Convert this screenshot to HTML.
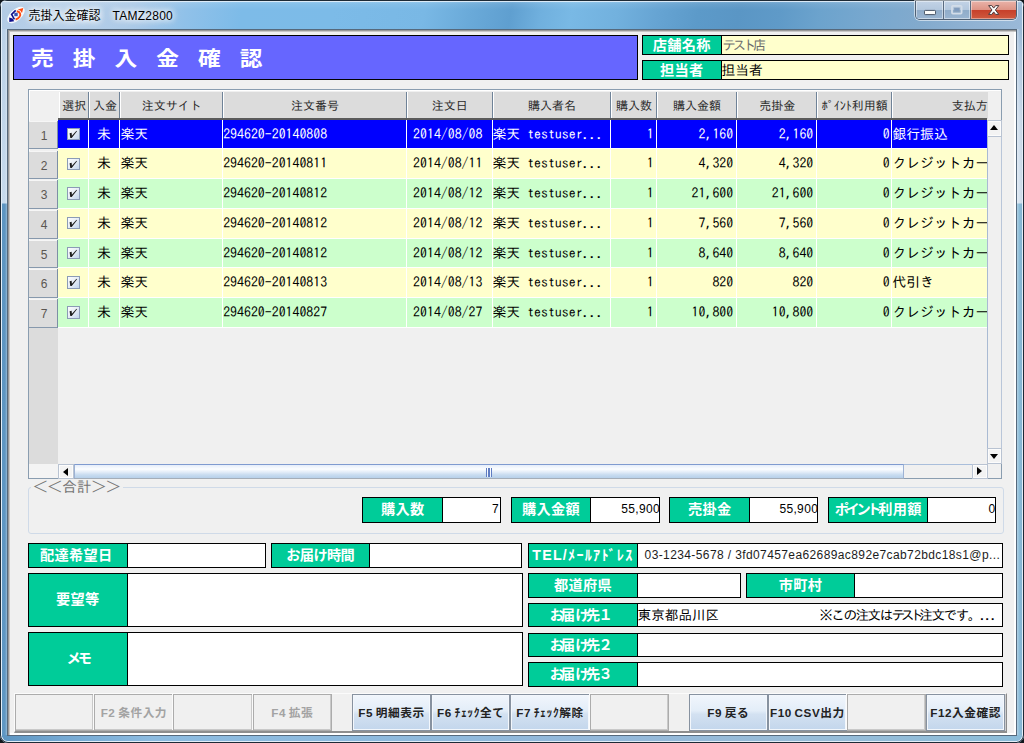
<!DOCTYPE html><html lang="ja"><head><meta charset="utf-8"><title>売掛入金確認 TAMZ2800</title><style>
*{box-sizing:border-box;margin:0;padding:0}
html,body{width:1024px;height:743px;overflow:hidden;background:#10161c;}
body{position:relative;font-family:"Liberation Sans","IPAGothic","Noto Sans CJK JP",sans-serif;font-size:12px;color:#000}
.abs,#win div,#win span,#win svg{position:absolute}
#win{position:absolute;left:0;top:0;width:1024px;height:743px;border-radius:7px 7px 8px 8px;overflow:hidden;
 background:#8cb4d8;
 box-shadow:inset 0 0 0 1px #1d2a36, inset 0 0 0 2px #e3eef8;}
#tb{left:0;top:0;width:1024px;height:30px;
 background:linear-gradient(180deg,rgba(255,255,255,.28) 0,rgba(255,255,255,.08) 4px,rgba(255,255,255,0) 10px,rgba(255,255,255,0) 100%),linear-gradient(100deg,#b2cbe5 0px,#b9d1e9 60px,#adcae7 130px,#90c1e9 185px,#7dbbe8 240px,#7cbbe8 330px,#79b8e5 420px,#6aaad9 465px,#5f9fd0 505px,#70b0de 535px,#79b9e5 565px,#72b1de 610px,#66a4d3 650px,#5c9ac9 690px,#5a96c5 730px,#5f9ac8 770px,#6ca3cd 810px,#78a8cf 860px,#82aacd 910px,#90b2d3 960px,#9dbbd9 1024px);
 box-shadow:inset 0 1px 0 #1d2a36, inset 0 2px 0 rgba(227,238,248,.9), inset 1px 0 0 #1d2a36, inset -1px 0 0 #1d2a36, inset 2px 0 0 #e3eef8, inset -2px 0 0 #e3eef8}
#lf{left:2px;top:29px;width:5px;height:708px;background:linear-gradient(90deg,rgba(255,255,255,0) 0,rgba(255,255,255,0) 60%,rgba(255,255,255,.35) 100%),linear-gradient(180deg,#bbd1e7 0,#c6daec 174px,#5d95c1 175px,#5f97c3 100%)}
#rf{left:1017px;top:29px;width:5px;height:708px;background:linear-gradient(90deg,rgba(255,255,255,.3) 0,rgba(255,255,255,0) 50%,rgba(0,40,80,.06) 100%),linear-gradient(180deg,#a0bdda 0,#b8cee4 30px,#cfdeed 90px,#d8e4f0 174px,#8bbcd8 175px,#8cbcd9 100%)}
#bf{left:2px;top:735px;width:1020px;height:6px;border-radius:0 0 6px 6px;background:linear-gradient(90deg,#5d95c1 0,#74a8d2 60px,#8cbbe0 150px,#8dbade 330px,#93b8da 600px,#98bcd8 800px,#8cbcd9 100%)}
#client{left:7px;top:29px;width:1010px;height:707px;background:#f0f0f0;border:1px solid #56697c;box-shadow:inset 1px 1px 0 #989898,inset 2px 2px 0 #c6c6c6,inset -2px -2px 0 #fff;}
#bline{left:14px;top:693.4px;width:993.2px;height:39.4px;border-top:1px solid #fbfbfb;border-left:1px solid #fbfbfb;border-right:1px solid #8c8c8c;border-bottom:2px solid #8e8e8e;box-shadow:inset -1px 0 0 rgba(140,140,140,.35)}
#ttl{left:28.5px;top:7.6px;font-size:12px;line-height:16px;color:#000;white-space:pre;font-family:"Liberation Sans","Noto Sans CJK JP",sans-serif;text-shadow:0 0 6px #fff,0 0 6px #fff,0 0 10px #fff}
#banner{left:13px;top:35px;width:625px;height:45px;background:#6666ff;border:1px solid #000}
#banner span{left:17px;top:9.6px;transform:scale(1.05,.94);transform-origin:0 0;font-family:"Liberation Sans","Noto Sans CJK JP",sans-serif;font-weight:bold;font-size:21.6px;line-height:28px;color:#fff;letter-spacing:18.17px;white-space:pre}
.lb{background:#00cc99;border:1px solid #000;color:#fff;font-family:"Liberation Sans","Noto Sans CJK JP",sans-serif;font-weight:bold;font-size:14.2px;letter-spacing:.3px;text-align:center;white-space:pre;overflow:hidden}
.fd{background:#fff;border:1px solid #000;border-left:none;white-space:pre;overflow:hidden}
.yl{background:#ffffcc}
.lb i{font-style:normal;letter-spacing:-3.3px}
.lb i.d{margin-left:-2.2px;letter-spacing:-1.5px}
/* grid */
#grid{left:28px;top:89px;width:974px;height:390px;border:1px solid #8a9db0;background:#f0f0f0;box-shadow:inset 1px 1px 0 #fff}
.hc{top:92px;height:26.5px;background:#dcdcdc;border-right:1px solid #6f8297;border-left:1px solid #fff;font-family:"IPAGothic","Noto Sans CJK JP",sans-serif;font-size:12px;line-height:27px;text-align:center;color:#2a2a2a;white-space:pre;overflow:hidden}
#hline{left:58px;top:118.3px;width:929px;height:1.6px;background:#5a5a5a}
.rh{left:29px;width:29px;background:#dcdcdc;border-bottom:1px solid #8698ac;font-size:12px;color:#5b5651;text-align:center;padding-left:2px;padding-top:1px;border-right:1px solid #7d8fa5;box-shadow:inset 0 1px 0 #f6f6f6}
.row{left:58px;width:929px;}
.c{top:0;height:100%;border-right:1px solid #fff;border-bottom:1px solid #fff;font-family:"IPAGothic","Noto Sans CJK JP",monospace;font-size:13.86px;white-space:pre;overflow:hidden}
.r{text-align:right}
.ct{text-align:center;padding-right:1px}
.cb{width:12.6px;height:12.5px;border:1px solid #8b9bb6;background:linear-gradient(135deg,#fdfdfe 0,#e6edf6 50%,#c2d5ec 100%)}

/* scrollbars */
#vs{left:986.6px;top:120.5px;width:15px;height:343px;background:#f0f0f0;border-left:1px solid #a9bad3;border-right:1px solid #b9c6d9}
.sbtn{background:#f3f3f3;border:1px solid #fcfcfc;box-shadow:0 0 0 1px #b9c3d2}
.tri{width:0;height:0;border:4px solid transparent}
#hs{left:58px;top:463.5px;width:929px;height:14.5px;background:#f0f0f0;border-top:1px solid #a9bedb}
#thumb{left:73.6px;top:463.5px;width:830px;height:15.5px;border:1px solid #9db2d4;border-top-color:#7f9bd0;border-bottom-color:#a4adb8;border-radius:1px;background:linear-gradient(180deg,#e6eefa 0,#fbfdff 32%,#e2ecf8 55%,#c9dcf0 75%,#b7d0ea 100%)}
#rhfill{left:29px;top:327.6px;width:29px;height:136px;background:#dcdcdc}
/* groupbox */
#gb{left:28px;top:486.5px;width:976px;height:47.5px;border:1px solid #cfdae8;border-radius:3px}
#gbt{left:31px;top:479.6px;padding:0 2px;background:#f0f0f0;font-family:"IPAGothic","Noto Sans CJK JP",sans-serif;font-size:14.6px;line-height:13px;color:#757575;white-space:pre}
.v{font-family:"Liberation Sans","IPAGothic",sans-serif;font-size:12px;text-align:right}
.btn{top:694.4px;height:36.6px;width:79.4px;border:1px solid #acacac;background:#f0f0f0;color:#a3a3a3;font-family:"Liberation Sans","Noto Sans CJK JP",sans-serif;font-weight:bold;font-size:11.7px;line-height:36.5px;letter-spacing:.55px;word-spacing:-1px;text-align:center;white-space:pre;box-shadow:-1px -1px 0 #fbfbfb,inset -1px -1px 0 #c9c9c9}
.btn.en{color:#222;border-color:#8792a0;background:linear-gradient(180deg,#f1f6fc 0,#e3edf8 45%,#d3e1f1 55%,#c3d6ec 100%);box-shadow:inset 0 0 0 1px #f3f7fc}

/* caption buttons */
#cap{left:915px;top:1px;width:102px;height:18.5px;border:1px solid #4f6074;border-top:none;border-radius:0 0 5px 5px;overflow:hidden;box-shadow:0 0 0 1px rgba(255,255,255,.55)}
#cap div{top:0;height:100%}
#cmin,#cmax{background:linear-gradient(180deg,#c3d3e6 0,#b4c8de 48%,#90acc9 52%,#9ab5d1 100%);box-shadow:inset 0 0 0 1px rgba(255,255,255,.45)}
#cmin{left:0;width:28px;border-right:1px solid #5a6b80}
#cmax{left:28px;width:26.5px;border-right:1px solid #5a6b80}
#ccls{left:54.5px;width:47px;background:linear-gradient(180deg,#e9b3a9 0,#de9486 48%,#c7402a 52%,#cf5a3f 100%);box-shadow:inset 0 0 0 1px rgba(255,255,255,.4)}
#ttl b{font-weight:normal;letter-spacing:.25px}
.ck{left:-1px;top:-1px;width:12.5px;height:12.5px}
</style></head><body>
<div id="win">
<div id="tb"></div><div id="lf"></div><div id="rf"></div><div id="bf"></div>
<div id="ttl">売掛入金確認　<b>TAMZ2800</b></div>
<div id="client"></div><div id="bline"></div>
<div id="banner"><span>売掛入金確認</span></div>
<div id="grid"></div>
<div class="hc" style="left:59.1px;width:30.3px">選択</div>
<div class="hc" style="left:89.4px;width:31.0px">入金</div>
<div class="hc" style="left:120.4px;width:102.8px">注文サイト</div>
<div class="hc" style="left:223.2px;width:183.8px">注文番号</div>
<div class="hc" style="left:407.0px;width:85.5px">注文日</div>
<div class="hc" style="left:492.5px;width:118.9px">購入者名</div>
<div class="hc" style="left:611.4px;width:45.4px">購入数</div>
<div class="hc" style="left:656.8px;width:80.4px">購入金額</div>
<div class="hc" style="left:737.2px;width:80.1px">売掛金</div>
<div class="hc" style="left:817.3px;width:75.1px">ﾎﾟｲﾝﾄ利用額</div>
<div class="hc" style="left:892.4px;width:95.4px;text-align:right;border-right:none;padding-right:0">支払方</div>
<div id="hline"></div>
<div class="rh" style="top:120.90px;height:28.51px;line-height:28.71px">1</div>
<div class="row" style="top:119.70px;height:29.71px;background:#0000ff;color:#fff;line-height:29.71px">
<div class="c ct" style="left:0.1px;width:31.3px"><div class="cb" style="left:9.2px;top:8.1px"><svg class="ck" viewBox="0 0 12.5 12.5"><path d="M2.6 5.2L4.6 4.7L4.9 7.8L9.5 2.7L10 3.3L4.7 10L3.3 10Z" fill="#1a1a1a"/></svg></div></div>
<div class="c ct" style="left:31.4px;width:31.0px">未</div>
<div class="c " style="left:62.4px;width:102.8px">楽天</div>
<div class="c " style="left:165.2px;width:183.8px">294620-20140808</div>
<div class="c ct" style="left:349.0px;width:85.5px;padding-right:3px">2014/08/08</div>
<div class="c " style="left:434.5px;width:118.9px">楽天 testuser...</div>
<div class="c r" style="left:553.4px;width:45.4px;padding-right:2px">1</div>
<div class="c r" style="left:598.8px;width:80.4px;padding-right:3px">2,160</div>
<div class="c r" style="left:679.2px;width:80.1px;padding-right:3px">2,160</div>
<div class="c r" style="left:759.3px;width:75.1px;padding-right:1.7px">0</div>
<div class="c " style="left:834.4px;width:95.4px">銀行振込</div>
</div>
<div class="rh" style="top:150.61px;height:28.51px;line-height:28.71px">2</div>
<div class="row" style="top:149.41px;height:29.71px;background:#ffffcc;color:#000;line-height:29.71px">
<div class="c ct" style="left:0.1px;width:31.3px"><div class="cb" style="left:9.2px;top:8.1px"><svg class="ck" viewBox="0 0 12.5 12.5"><path d="M2.6 5.2L4.6 4.7L4.9 7.8L9.5 2.7L10 3.3L4.7 10L3.3 10Z" fill="#1a1a1a"/></svg></div></div>
<div class="c ct" style="left:31.4px;width:31.0px">未</div>
<div class="c " style="left:62.4px;width:102.8px">楽天</div>
<div class="c " style="left:165.2px;width:183.8px">294620-20140811</div>
<div class="c ct" style="left:349.0px;width:85.5px;padding-right:3px">2014/08/11</div>
<div class="c " style="left:434.5px;width:118.9px">楽天 testuser...</div>
<div class="c r" style="left:553.4px;width:45.4px;padding-right:2px">1</div>
<div class="c r" style="left:598.8px;width:80.4px;padding-right:3px">4,320</div>
<div class="c r" style="left:679.2px;width:80.1px;padding-right:3px">4,320</div>
<div class="c r" style="left:759.3px;width:75.1px;padding-right:1.7px">0</div>
<div class="c " style="left:834.4px;width:95.4px">クレジットカー</div>
</div>
<div class="rh" style="top:180.32px;height:28.51px;line-height:28.71px">3</div>
<div class="row" style="top:179.12px;height:29.71px;background:#ccffcc;color:#000;line-height:29.71px">
<div class="c ct" style="left:0.1px;width:31.3px"><div class="cb" style="left:9.2px;top:8.1px"><svg class="ck" viewBox="0 0 12.5 12.5"><path d="M2.6 5.2L4.6 4.7L4.9 7.8L9.5 2.7L10 3.3L4.7 10L3.3 10Z" fill="#1a1a1a"/></svg></div></div>
<div class="c ct" style="left:31.4px;width:31.0px">未</div>
<div class="c " style="left:62.4px;width:102.8px">楽天</div>
<div class="c " style="left:165.2px;width:183.8px">294620-20140812</div>
<div class="c ct" style="left:349.0px;width:85.5px;padding-right:3px">2014/08/12</div>
<div class="c " style="left:434.5px;width:118.9px">楽天 testuser...</div>
<div class="c r" style="left:553.4px;width:45.4px;padding-right:2px">1</div>
<div class="c r" style="left:598.8px;width:80.4px;padding-right:3px">21,600</div>
<div class="c r" style="left:679.2px;width:80.1px;padding-right:3px">21,600</div>
<div class="c r" style="left:759.3px;width:75.1px;padding-right:1.7px">0</div>
<div class="c " style="left:834.4px;width:95.4px">クレジットカー</div>
</div>
<div class="rh" style="top:210.03px;height:28.51px;line-height:28.71px">4</div>
<div class="row" style="top:208.83px;height:29.71px;background:#ffffcc;color:#000;line-height:29.71px">
<div class="c ct" style="left:0.1px;width:31.3px"><div class="cb" style="left:9.2px;top:8.1px"><svg class="ck" viewBox="0 0 12.5 12.5"><path d="M2.6 5.2L4.6 4.7L4.9 7.8L9.5 2.7L10 3.3L4.7 10L3.3 10Z" fill="#1a1a1a"/></svg></div></div>
<div class="c ct" style="left:31.4px;width:31.0px">未</div>
<div class="c " style="left:62.4px;width:102.8px">楽天</div>
<div class="c " style="left:165.2px;width:183.8px">294620-20140812</div>
<div class="c ct" style="left:349.0px;width:85.5px;padding-right:3px">2014/08/12</div>
<div class="c " style="left:434.5px;width:118.9px">楽天 testuser...</div>
<div class="c r" style="left:553.4px;width:45.4px;padding-right:2px">1</div>
<div class="c r" style="left:598.8px;width:80.4px;padding-right:3px">7,560</div>
<div class="c r" style="left:679.2px;width:80.1px;padding-right:3px">7,560</div>
<div class="c r" style="left:759.3px;width:75.1px;padding-right:1.7px">0</div>
<div class="c " style="left:834.4px;width:95.4px">クレジットカー</div>
</div>
<div class="rh" style="top:239.74px;height:28.51px;line-height:28.71px">5</div>
<div class="row" style="top:238.54px;height:29.71px;background:#ccffcc;color:#000;line-height:29.71px">
<div class="c ct" style="left:0.1px;width:31.3px"><div class="cb" style="left:9.2px;top:8.1px"><svg class="ck" viewBox="0 0 12.5 12.5"><path d="M2.6 5.2L4.6 4.7L4.9 7.8L9.5 2.7L10 3.3L4.7 10L3.3 10Z" fill="#1a1a1a"/></svg></div></div>
<div class="c ct" style="left:31.4px;width:31.0px">未</div>
<div class="c " style="left:62.4px;width:102.8px">楽天</div>
<div class="c " style="left:165.2px;width:183.8px">294620-20140812</div>
<div class="c ct" style="left:349.0px;width:85.5px;padding-right:3px">2014/08/12</div>
<div class="c " style="left:434.5px;width:118.9px">楽天 testuser...</div>
<div class="c r" style="left:553.4px;width:45.4px;padding-right:2px">1</div>
<div class="c r" style="left:598.8px;width:80.4px;padding-right:3px">8,640</div>
<div class="c r" style="left:679.2px;width:80.1px;padding-right:3px">8,640</div>
<div class="c r" style="left:759.3px;width:75.1px;padding-right:1.7px">0</div>
<div class="c " style="left:834.4px;width:95.4px">クレジットカー</div>
</div>
<div class="rh" style="top:269.45px;height:28.51px;line-height:28.71px">6</div>
<div class="row" style="top:268.25px;height:29.71px;background:#ffffcc;color:#000;line-height:29.71px">
<div class="c ct" style="left:0.1px;width:31.3px"><div class="cb" style="left:9.2px;top:8.1px"><svg class="ck" viewBox="0 0 12.5 12.5"><path d="M2.6 5.2L4.6 4.7L4.9 7.8L9.5 2.7L10 3.3L4.7 10L3.3 10Z" fill="#1a1a1a"/></svg></div></div>
<div class="c ct" style="left:31.4px;width:31.0px">未</div>
<div class="c " style="left:62.4px;width:102.8px">楽天</div>
<div class="c " style="left:165.2px;width:183.8px">294620-20140813</div>
<div class="c ct" style="left:349.0px;width:85.5px;padding-right:3px">2014/08/13</div>
<div class="c " style="left:434.5px;width:118.9px">楽天 testuser...</div>
<div class="c r" style="left:553.4px;width:45.4px;padding-right:2px">1</div>
<div class="c r" style="left:598.8px;width:80.4px;padding-right:3px">820</div>
<div class="c r" style="left:679.2px;width:80.1px;padding-right:3px">820</div>
<div class="c r" style="left:759.3px;width:75.1px;padding-right:1.7px">0</div>
<div class="c " style="left:834.4px;width:95.4px">代引き</div>
</div>
<div class="rh" style="top:299.16px;height:28.51px;line-height:28.71px">7</div>
<div class="row" style="top:297.96px;height:29.71px;background:#ccffcc;color:#000;line-height:29.71px">
<div class="c ct" style="left:0.1px;width:31.3px"><div class="cb" style="left:9.2px;top:8.1px"><svg class="ck" viewBox="0 0 12.5 12.5"><path d="M2.6 5.2L4.6 4.7L4.9 7.8L9.5 2.7L10 3.3L4.7 10L3.3 10Z" fill="#1a1a1a"/></svg></div></div>
<div class="c ct" style="left:31.4px;width:31.0px">未</div>
<div class="c " style="left:62.4px;width:102.8px">楽天</div>
<div class="c " style="left:165.2px;width:183.8px">294620-20140827</div>
<div class="c ct" style="left:349.0px;width:85.5px;padding-right:3px">2014/08/27</div>
<div class="c " style="left:434.5px;width:118.9px">楽天 testuser...</div>
<div class="c r" style="left:553.4px;width:45.4px;padding-right:2px">1</div>
<div class="c r" style="left:598.8px;width:80.4px;padding-right:3px">10,800</div>
<div class="c r" style="left:679.2px;width:80.1px;padding-right:3px">10,800</div>
<div class="c r" style="left:759.3px;width:75.1px;padding-right:1.7px">0</div>
<div class="c " style="left:834.4px;width:95.4px">クレジットカー</div>
</div>
<div id="rhfill"></div>
<div id="vs"></div>
<div class="sbtn" style="left:988px;top:121px;width:13px;height:14.5px"></div><div class="tri" style="left:990.2px;top:120.2px;border-bottom:5px solid #000;border-top-width:5px"></div>
<div class="sbtn" style="left:988px;top:448.5px;width:13px;height:14.5px"></div><div class="tri" style="left:990.2px;top:454.2px;border-top:5px solid #000;border-bottom-width:0"></div>
<div style="left:29px;top:463.5px;width:29px;height:14.5px;background:#f4f4f4"></div><div id="hs"></div>
<div class="sbtn" style="left:58.5px;top:464.5px;width:14.5px;height:13.5px"></div><div class="tri" style="left:62.8px;top:467.5px;border-right:5px solid #000;border-left-width:0"></div>
<div class="sbtn" style="left:972.5px;top:464.5px;width:14px;height:13.5px"></div><div class="tri" style="left:977px;top:467.3px;border-left:5px solid #000;border-right-width:0"></div>
<div id="thumb"></div>
<div style="left:485.8px;top:467.5px;width:6.2px;height:9.5px;background:repeating-linear-gradient(90deg,#5f7cc2 0,#5f7cc2 1.1px,rgba(255,255,255,.7) 1.1px,rgba(255,255,255,.7) 2.45px)"></div>
<div class="lb" style="left:642.0px;top:34.8px;width:79.5px;height:20.4px;line-height:18.4px;">店舗名称</div>
<div class="fd yl" style="left:721.5px;top:34.8px;width:287.8px;height:20.4px;line-height:18.4px;font-family:IPAGothic,sans-serif;font-size:13.4px;color:#6d6d6d;padding-left:1px"><span style="position:static;letter-spacing:-3.2px">テスト</span>店</div>
<div class="lb" style="left:642.0px;top:59.6px;width:79.5px;height:20.4px;line-height:18.4px;">担当者</div>
<div class="fd yl" style="left:721.5px;top:59.6px;width:287.8px;height:20.4px;line-height:18.4px;font-family:IPAGothic,sans-serif;font-size:13.7px;color:#000">担当者</div>
<div id="gb"></div><div id="gbt">＜＜合計＞＞</div>
<div class="lb" style="left:362.3px;top:497.3px;width:81.0px;height:25.7px;line-height:23.7px;">購入数</div>
<div class="fd v" style="left:443.3px;top:497.3px;width:57.5px;height:25.7px;line-height:23.7px;padding-right:1px">7</div>
<div class="lb" style="left:511.2px;top:497.3px;width:79.6px;height:25.7px;line-height:23.7px;">購入金額</div>
<div class="fd v" style="left:590.8px;top:497.3px;width:68.8px;height:25.7px;line-height:23.7px;padding-right:0px;letter-spacing:0.35px;overflow:visible"><span style="position:relative;left:1.5px">55,900</span></div>
<div class="lb" style="left:669.4px;top:497.3px;width:80.9px;height:25.7px;line-height:23.7px;">売掛金</div>
<div class="fd v" style="left:750.3px;top:497.3px;width:67.4px;height:25.7px;line-height:23.7px;padding-right:0px;letter-spacing:0.35px;overflow:visible"><span style="position:relative;left:1.5px">55,900</span></div>
<div class="lb" style="left:828.0px;top:497.3px;width:100.3px;height:25.7px;line-height:23.7px;"><i>ポイント</i>利用額</div>
<div class="fd v" style="left:928.3px;top:497.3px;width:67.9px;height:25.7px;line-height:23.7px;padding-right:0px">0</div>
<div class="lb" style="left:28.0px;top:543.4px;width:99.5px;height:24.8px;line-height:22.8px;padding-right:3px">配達希望日</div>
<div class="fd " style="left:127.5px;top:543.4px;width:138.5px;height:24.8px;line-height:22.8px;"></div>
<div class="lb" style="left:270.7px;top:543.4px;width:99.1px;height:24.8px;line-height:22.8px;letter-spacing:-0.6px">お届け時間</div>
<div class="fd " style="left:369.8px;top:543.4px;width:152.7px;height:24.8px;line-height:22.8px;"></div>
<div class="lb" style="left:28.0px;top:573.0px;width:99.5px;height:53.6px;line-height:51.6px;">要望等</div>
<div class="fd " style="left:127.5px;top:573.0px;width:395.0px;height:53.6px;line-height:51.6px;"></div>
<div class="lb" style="left:28.0px;top:632.4px;width:99.5px;height:53.9px;line-height:51.9px;letter-spacing:-3px">メモ</div>
<div class="fd " style="left:127.5px;top:632.4px;width:395.0px;height:53.9px;line-height:51.9px;"></div>
<div class="lb" style="left:528.3px;top:543.4px;width:109.3px;height:24.8px;line-height:22.8px;letter-spacing:1.25px">TEL/ﾒｰﾙｱﾄﾞﾚｽ</div>
<div class="fd " style="left:637.6px;top:543.4px;width:365.6px;height:24.8px;line-height:22.8px;padding-left:7px;font-size:12px;letter-spacing:0.39px;color:#1c1c1c">03-1234-5678 / 3fd07457ea62689ac892e7cab72bdc18s1@p...</div>
<div class="lb" style="left:528.3px;top:573.1px;width:109.3px;height:24.8px;line-height:22.8px;">都道府県</div>
<div class="fd " style="left:637.6px;top:573.1px;width:103.7px;height:24.8px;line-height:22.8px;"></div>
<div class="lb" style="left:746.0px;top:573.1px;width:109.2px;height:24.8px;line-height:22.8px;">市町村</div>
<div class="fd " style="left:855.2px;top:573.1px;width:148.0px;height:24.8px;line-height:22.8px;"></div>
<div class="lb" style="left:528.3px;top:602.8px;width:109.3px;height:24.6px;line-height:22.6px;padding-right:5px"><i>お</i>届<i>け</i>先<i class="d">１</i></div>
<div class="fd " style="left:637.6px;top:602.8px;width:365.6px;height:24.6px;line-height:22.6px;font-family:IPAGothic,sans-serif;font-size:13.6px">東京都品川区<span style="left:181.6px;top:0;letter-spacing:-1.5px">※この注文は<span style="position:static;letter-spacing:-4.4px">テスト</span>注文です。...</span></div>
<div class="lb" style="left:528.3px;top:632.7px;width:109.3px;height:24.6px;line-height:22.6px;padding-right:5px"><i>お</i>届<i>け</i>先<i class="d">２</i></div>
<div class="fd " style="left:637.6px;top:632.7px;width:365.6px;height:24.6px;line-height:22.6px;"></div>
<div class="lb" style="left:528.3px;top:662.4px;width:109.3px;height:24.6px;line-height:22.6px;padding-right:5px"><i>お</i>届<i>け</i>先<i class="d">３</i></div>
<div class="fd " style="left:637.6px;top:662.4px;width:365.6px;height:24.6px;line-height:22.6px;"></div>
<div class="btn" style="left:15.0px"></div>
<div class="btn" style="left:94.2px">F2 条件入力</div>
<div class="btn" style="left:173.4px"></div>
<div class="btn" style="left:252.6px">F4 拡張</div>
<div class="btn en" style="left:351.9px">F5 明細表示</div>
<div class="btn en" style="left:431.1px">F6 ﾁｪｯｸ全て</div>
<div class="btn en" style="left:510.3px">F7 ﾁｪｯｸ解除</div>
<div class="btn" style="left:589.5px"></div>
<div class="btn en" style="left:688.6px">F9 戻る</div>
<div class="btn en" style="left:767.7px">F10 CSV出力</div>
<div class="btn" style="left:846.8px"></div>
<div class="btn en" style="left:925.9px">F12入金確認</div>
<div id="cap"><div id="cmin"></div><div id="cmax"></div><div id="ccls"></div></div>
<svg class="abs" style="position:absolute;left:915px;top:0" width="103" height="21" viewBox="915 0 103 21"><rect x="924.5" y="10.4" width="11" height="4.2" rx="0.8" fill="#fcfcfa" stroke="#4a5666" stroke-width="1"/><rect x="952" y="5.8" width="9.6" height="7.8" rx="0.8" fill="none" stroke="#d2dce8" stroke-width="1.8"/><rect x="954.2" y="8" width="5.2" height="3.4" fill="#7f9cc0" stroke="#8c9fb6" stroke-width="0.6"/><path d="M988.6 5.6h3.2l1.9 2.5 1.9-2.5h3.2l-3.4 4.4 3.4 4.4h-3.2l-1.9-2.5-1.9 2.5h-3.2l3.4-4.4z" fill="#fff" stroke="#4b3a3c" stroke-width="1" stroke-linejoin="round"/></svg>
<svg class="abs" style="position:absolute;left:5px;top:4px" width="22" height="22" viewBox="5 4 22 22"><ellipse cx="16" cy="15" rx="10.6" ry="5.6" transform="rotate(-42 16 15)" fill="#fff" opacity=".85"/><path d="M15.7 10.4L11.6 14.5L14.4 19.3" fill="none" stroke="#10108c" stroke-width="1.6" stroke-linejoin="miter"/><path d="M9.2 17.6L9.3 22L14.2 21.2L12.6 18.6Z" fill="#10108c"/><path d="M16.8 11.2C20 11.6 21.2 14.6 19.6 16.8C18.6 18.2 17.2 19.1 15.6 19.5" fill="none" stroke="#ff4a10" stroke-width="1.9"/><path d="M17.8 9.4L23.3 7.9L22 13L20.2 10.6Z" fill="#ff4a10"/><rect x="14.3" y="12.8" width="3.4" height="3.4" fill="#3550b4"/></svg>
</div>
</body></html>
